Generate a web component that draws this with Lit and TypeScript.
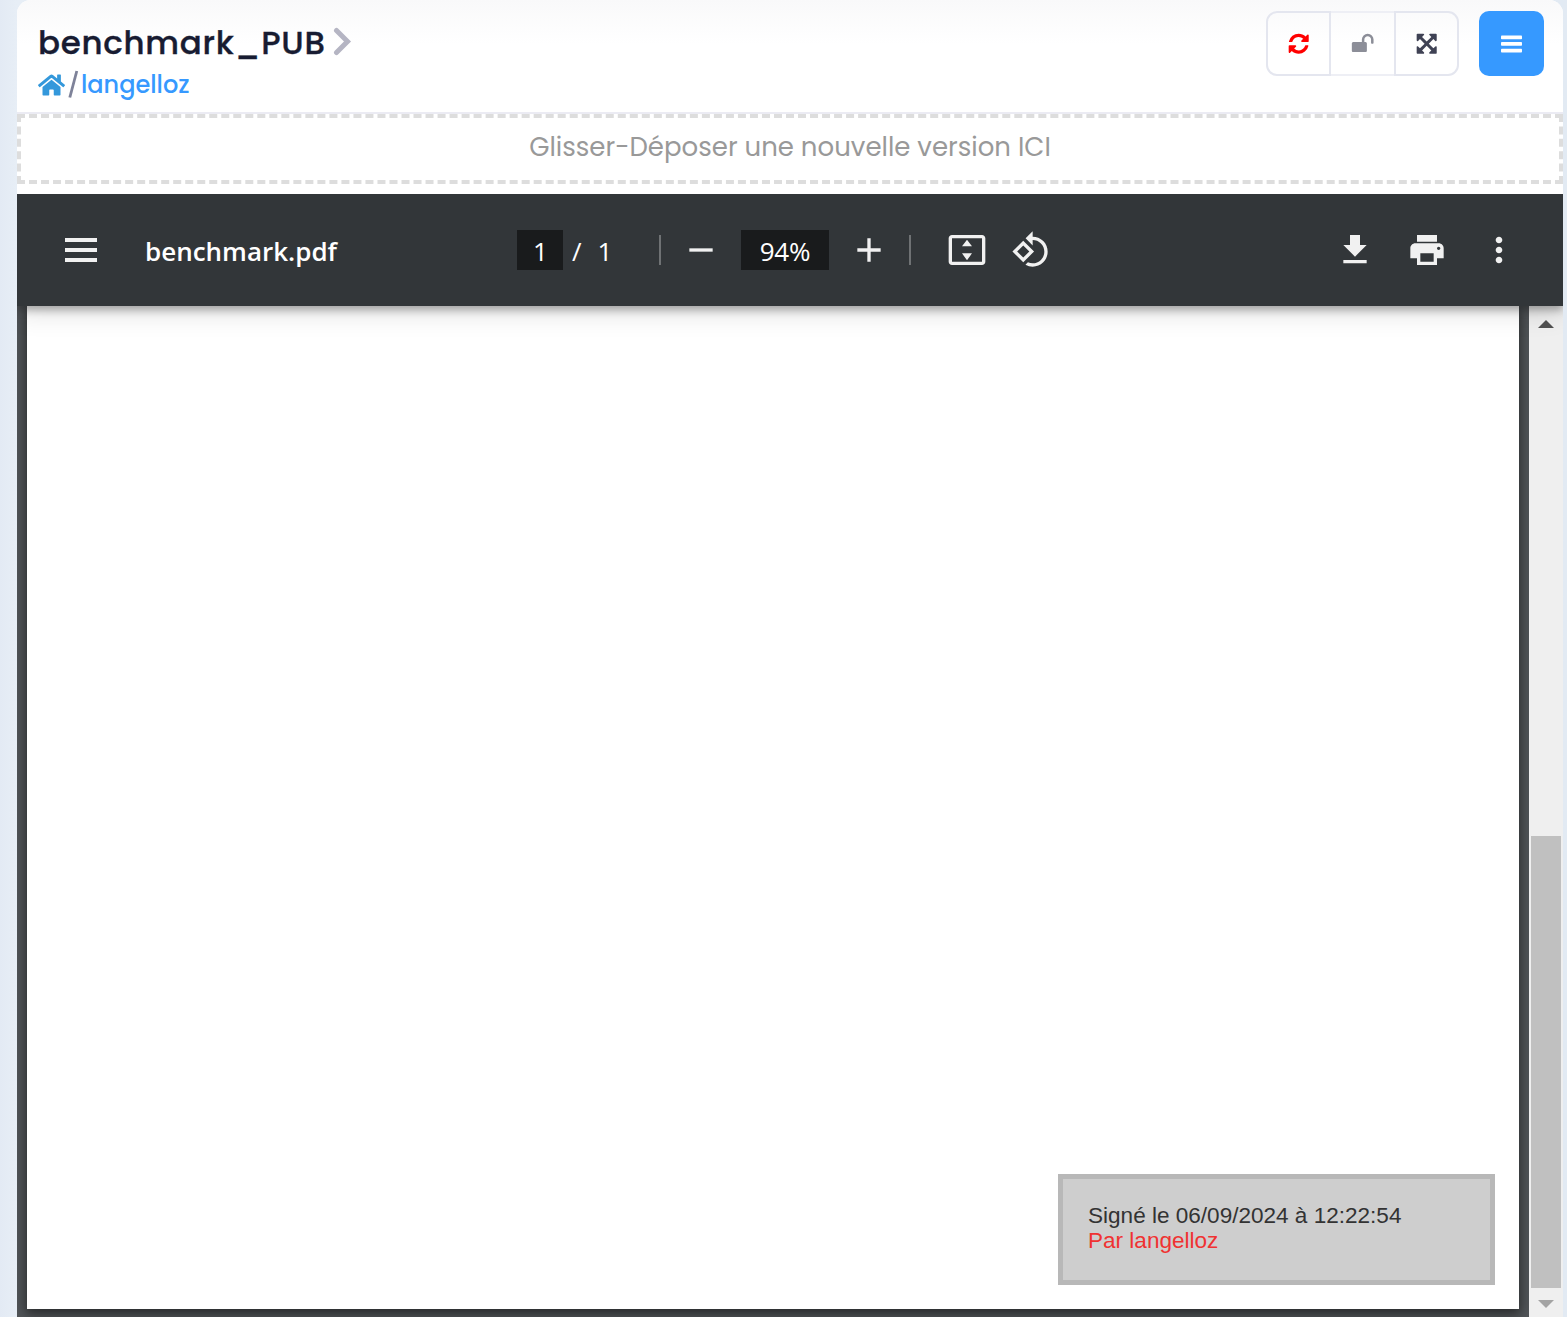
import { LitElement, html, css, svg } from "lit";
import { customElement } from "lit/decorators.js";

const fa = (d: string, cls = "") =>
  html`<svg class="fa ${cls}" viewBox="0 0 1792 1792"><path d=${d}></path></svg>`;
const md = (d: string, cls = "") =>
  html`<svg class="md ${cls}" viewBox="0 0 24 24"><path d=${d}></path></svg>`;

const REFRESH =
  "M1639 1056q0 5-1 7-64 268-268 434.5t-478 166.5q-146 0-282.5-55t-243.5-157l-129 129q-19 19-45 19t-45-19-19-45v-448q0-26 19-45t45-19h448q26 0 45 19t19 45-19 45l-137 137q71 66 161 102t187 36q134 0 250-65t186-179q11-17 53-117 8-23 30-23h192q13 0 22.5 9.5t9.5 22.5zm25-800v448q0 26-19 45t-45 19h-448q-26 0-45-19t-19-45 19-45l138-138q-148-137-349-137-134 0-250 65t-186 179q-11 17-53 117-8 23-30 23h-199q-13 0-22.5-9.5t-9.5-22.5v-7q65-268 270-434.5t480-166.5q146 0 284 55.5t245 156.5l130-129q19-19 45-19t45 19 19 45z";
const UNLOCK =
  "M1728 576v256q0 26-19 45t-45 19h-64q-26 0-45-19t-19-45v-256q0-106-75-181t-181-75-181 75-75 181v192h96q40 0 68 28t28 68v576q0 40-28 68t-68 28h-960q-40 0-68-28t-28-68v-576q0-40 28-68t68-28h672v-192q0-185 131.5-316.5t316.5-131.5 316.5 131.5 131.5 316.5z";
const ARROWS =
  "M1411 541l-355 355 355 355 144-144q29-31 70-14 39 17 39 59v448q0 26-19 45t-45 19h-448q-42 0-59-40-17-39 14-69l144-144-355-355-355 355 144 144q31 30 14 69-17 40-59 40h-448q-26 0-45-19t-19-45v-448q0-42 40-59 39-17 69 14l144 144 355-355-355-355-144 144q-19 19-45 19-12 0-24-5-40-17-40-59v-448q0-26 19-45t45-19h448q42 0 59 40 17 39-14 69l-144 144 355 355 355-355-144-144q-31-30-14-69 17-40 59-40h448q26 0 45 19t19 45v448q0 42-39 59-13 5-25 5-26 0-45-19z";
const HOME =
  "M280.37 148.26L96 300.11V464a16 16 0 0 0 16 16l112.06-.29a16 16 0 0 0 15.92-16V368a16 16 0 0 1 16-16h64a16 16 0 0 1 16 16v95.64a16 16 0 0 0 16 16.05L464 480a16 16 0 0 0 16-16V300L295.67 148.26a12.19 12.19 0 0 0-15.3 0zM571.6 251.47L488 182.56V44.05a12 12 0 0 0-12-12h-56a12 12 0 0 0-12 12v72.61L318.47 43a48 48 0 0 0-61 0L4.34 251.47a12 12 0 0 0-1.6 16.9l25.5 31A12 12 0 0 0 45.15 301l235.22-193.74a12.19 12.19 0 0 1 15.3 0L530.9 301a12 12 0 0 0 16.9-1.6l25.5-31a12 12 0 0 0-1.7-16.93z";
const ROTATE =
  "M7.34 6.41L.86 12.9l6.49 6.48 6.49-6.48-6.5-6.49zM3.69 12.9l3.66-3.66L11 12.9l-3.66 3.66-3.65-3.66zm15.67-6.26C17.61 4.88 15.3 4 13 4V.76L8.76 5 13 9.24V6c1.79 0 3.58.68 4.95 2.05 2.73 2.73 2.73 7.17 0 9.9C16.58 19.32 14.79 20 13 20c-.97 0-1.94-.21-2.84-.61l-1.49 1.49C10.02 21.62 11.51 22 13 22c2.3 0 4.61-.88 6.36-2.64 3.52-3.51 3.52-9.21 0-12.72z";
const FIT =
  "M21 3H3c-1.1 0-2 .9-2 2v14c0 1.1.9 2 2 2h18c1.1 0 2-.9 2-2V5c0-1.1-.9-2-2-2zm0 16.01H3V4.99h18v14.02zM9 9.8h6L12 5.9zM9 14h6l-3 4.1z";
const PRINT =
  "M19 8H5c-1.66 0-3 1.34-3 3v6h4v4h12v-4h4v-6c0-1.66-1.34-3-3-3zm-3 11H8v-5h8v5zm3-7c-.55 0-1-.45-1-1s.45-1 1-1 1 .45 1 1-.45 1-1 1zm-1-9H6v4h12V3z";
const DOTS =
  "M12 8c1.1 0 2-.9 2-2s-.9-2-2-2-2 .9-2 2 .9 2 2 2zm0 2c-1.1 0-2 .9-2 2s.9 2 2 2 2-.9 2-2-.9-2-2-2zm0 6c-1.1 0-2 .9-2 2s.9 2 2 2 2-.9 2-2-.9-2-2-2z";

@customElement("doc-header")
export class DocHeader extends LitElement {
  static styles = css`
    :host { display: flex; box-sizing: border-box; height: 114px; padding: 11px 19px 0 21px;
      justify-content: space-between; border-bottom: 2px solid #ebebf3; border-radius: 14px 14px 0 0;
      background: linear-gradient(#f9f9fa, #fff 44px);
      font-family: Poppins, Inter, "Open Sans", sans-serif; }
    .title { display: flex; align-items: center; height: 61px; gap: 7px; }
    .name { font-size: 32.5px; font-weight: 500; color: #181c32; white-space: nowrap; padding-top: 2px;
      letter-spacing: 0.72px; -webkit-text-stroke: 0.35px #181c32; }
    .chev { width: 19px; height: 29px; fill: none; stroke: #b5b5c3; stroke-width: 5; stroke-linecap: round; stroke-linejoin: miter; }
    .crumbs { display: flex; align-items: center; height: 24px; }
    .home { width: 27px; height: 24px; fill: #3498db; margin: 1px 0 0 -0.5px; }
    .slash { width: 11px; height: 30px; stroke: #7e8299; stroke-width: 2.8; margin: 0 2px 0 3.5px; }
    .user { font-size: 24px; font-weight: 500; color: #3699ff; }
    .actions { display: flex; gap: 20px; }
    .group { display: flex; height: 65px; width: 193px; }
    .btn { box-sizing: border-box; width: 65px; display: flex; align-items: center; justify-content: center; border: 2px solid #e4e6ef; }
    .first { border-radius: 11px 0 0 11px; }
    .middle { width: 63px; border-color: #eeeff5; border-left: 0; border-right: 0; }
    .last { border-radius: 0 11px 11px 0; }
    .fa { width: 23.4px; height: 23.4px; }
    .red { fill: #ff0000; }
    .grey { fill: #8c8e98; }
    .dark { fill: #3f4254; }
    .menu { width: 65px; height: 65px; border-radius: 10px; background: #3699ff; display: flex; align-items: center; justify-content: center; }
    .bars { width: 21px; height: 18px; fill: #fff; }
    .left { display: flex; flex-direction: column; }
  `;
  render() {
    return html`
      <div class="left">
        <div class="title"><span class="name">benchmark_PUB</span>
          <svg class="chev" viewBox="0 0 19 29"><path d="M3.5 3.5L14.5 14.5L3.5 25.5"></path></svg></div>
        <div class="crumbs">
          <svg class="home" viewBox="0 0 576 512"><path d=${HOME}></path></svg>
          <svg class="slash" viewBox="0 0 11 30"><path d="M1.8 28.5L8.8 2"></path></svg>
          <span class="user">langelloz</span>
        </div>
      </div>
      <div class="actions">
        <div class="group">
          <div class="btn first">${fa(REFRESH, "red")}</div>
          <div class="btn middle">${fa(UNLOCK, "grey")}</div>
          <div class="btn last">${fa(ARROWS, "dark")}</div>
        </div>
        <div class="menu"><svg class="bars" viewBox="0 0 21 18">
          ${[0.4, 7, 13.8].map((y) => svg`<rect x="0" y=${y} width="21" height="3.8" rx=".8"></rect>`)}
        </svg></div>
      </div>`;
  }
}

@customElement("pdf-toolbar")
export class PdfToolbar extends LitElement {
  static styles = css`
    :host { display: grid; grid-template-columns: 500px 1fr auto; align-items: center; height: 112px; background: #323639;
      color: #fff; font-family: "Segoe UI", "Open Sans", sans-serif; font-size: 26px;
      box-shadow: 0 4px 8px rgba(0,0,0,.3), 0 8px 24px rgba(0,0,0,.12); position: relative; clip-path: inset(0 0 -40px 0); }
    .start, .mid, .end { display: flex; align-items: center; }
    .start { padding-left: 44px; gap: 44px; }
    .md { width: 40px; height: 40px; fill: #f1f1f1; flex: none; }
    .file { font-weight: 600; font-size: 26px; padding-top: 1px; }
    .box { background: #191b1c; height: 40px; display: flex; align-items: center; justify-content: center; padding-top: 1px; box-sizing: border-box; }
    .page { width: 46px; padding-left: 1px; }
    .zoom { width: 88px; letter-spacing: -0.2px; }
    .of { width: 48px; padding: 1px 0 0 9px; box-sizing: border-box; display: flex; gap: 16px; }
    .sep { width: 2px; height: 30px; background: #6f7274; }
    .s1 { margin: 0 20px 0 48px; }
    .zoom { margin: 0 20px; }
    .s2 { margin: 0 36px 0 20px; }
    .rot { margin-left: 24px; }
    .end { gap: 32px; padding-right: 44px; }
  `;
  render() {
    return html`
      <div class="start">
        <svg class="md" viewBox="0 0 20 20"><path d="M2 4h16v2H2zM2 9h16v2H2zM2 14h16v2H2z"></path></svg>
        <span class="file">benchmark.pdf</span>
      </div>
      <div class="mid">
        <div class="box page">1</div>
        <div class="of"><span>/</span><span>1</span></div>
        <div class="sep s1"></div>
        ${md("M5 11h14v2H5z")}
        <div class="box zoom">94%</div>
        ${md("M19 13h-6v6h-2v-6H5v-2h6V5h2v6h6v2z")}
        <div class="sep s2"></div>
        ${md(FIT)} ${md(ROTATE, "rot")}
      </div>
      <div class="end">
        ${md("M19 9h-4V3H9v6H5l7 7 7-7zM5 18v2h14v-2H5z")} ${md(PRINT)} ${md(DOTS)}
      </div>`;
  }
}

@customElement("pdf-view")
export class PdfView extends LitElement {
  static styles = css`
    :host { display: grid; grid-template-columns: 1fr 34px; min-height: 0; overflow: hidden; }
    .canvas { background: #525659; padding: 0 10px 8px; display: flex; overflow: hidden; }
    .sheet { flex: 1; background: #fff; display: flex; align-items: flex-end; justify-content: flex-end; padding: 0 24px 24px 0;
      box-shadow: 0 4px 8px rgba(0,0,0,.3), 0 4px 16px 2px rgba(0,0,0,.3); }
    .stamp { box-sizing: border-box; width: 437px; height: 111px; border: 5px solid #b8b8b8; background: #cecece; padding: 24px 25px;
      font-family: Arial, "Liberation Sans", sans-serif; font-size: 22.56px; line-height: 25px; color: #333; white-space: nowrap; }
    .by { color: #f03232; }
    .scroll { background: #efefef; display: flex; flex-direction: column; align-items: center; }
    .arrow { width: 16px; height: 8px; fill: #505050; }
    .up { margin-top: 14px; }
    .thumb { width: 30px; height: 452px; margin-top: auto; background: #c0c0c0; }
    .down { fill: #a3a3a3; margin: 12px 0 9px; }
  `;
  render() {
    return html`
      <div class="canvas"><div class="sheet"><div class="stamp">
        <div>Signé le 06/09/2024 à 12:22:54</div><div class="by">Par langelloz</div>
      </div></div></div>
      <div class="scroll">
        <svg class="arrow up" viewBox="0 0 16 8"><path d="M0 8L8 0L16 8z"></path></svg>
        <div class="thumb"></div>
        <svg class="arrow down" viewBox="0 0 16 8"><path d="M0 0L8 8L16 0z"></path></svg>
      </div>`;
  }
}

@customElement("app-root")
export class AppRoot extends LitElement {
  static styles = css`
    :host { display: block; box-sizing: border-box; width: 1567px; height: 1317px; overflow: hidden; padding: 0 4px 0 17px;
      background: linear-gradient(90deg, #e3eaf4, #e7eef6 17px, #e2eaf3); }
    .panel { height: 1317px; display: grid; grid-template-rows: 114px 70px 10px 112px 1fr; background: #fff; border-radius: 14px 14px 0 0; }
    .drop { box-sizing: border-box; border: 4px dashed #ddd; display: flex; align-items: center; justify-content: center;
      padding-bottom: 3px; color: #999; font-family: Poppins, Inter, "Open Sans", sans-serif;
      font-size: 26px; white-space: nowrap; }
    .bar { z-index: 1; }
  `;
  render() {
    return html`<div class="panel">
      <doc-header></doc-header>
      <div class="drop">Glisser-Déposer une nouvelle version ICI</div>
      <div></div>
      <pdf-toolbar class="bar"></pdf-toolbar>
      <pdf-view></pdf-view>
    </div>`;
  }
}
